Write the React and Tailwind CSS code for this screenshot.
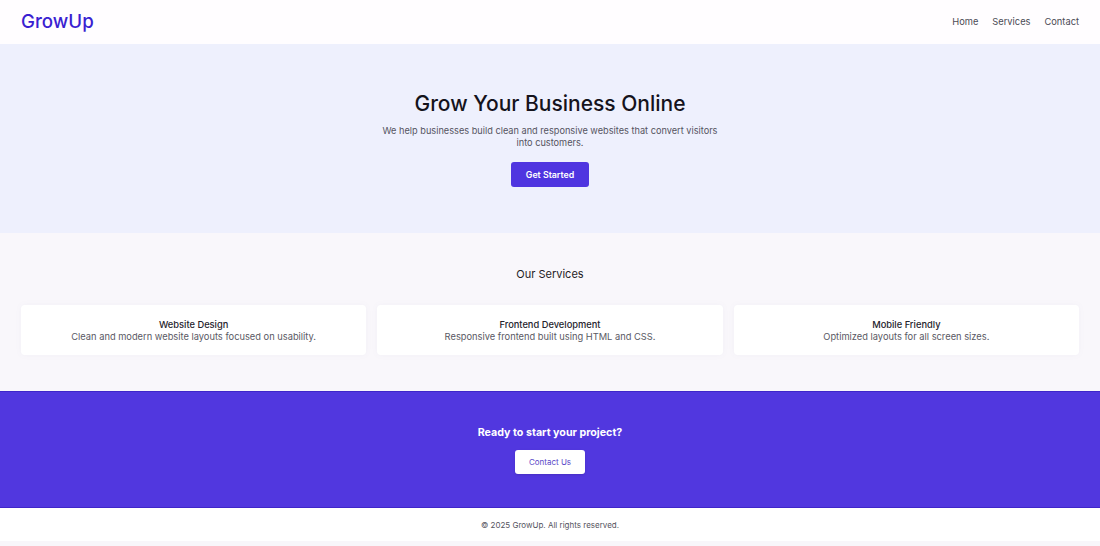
import React from 'react';

const services = [
  { title: 'Website Design', text: 'Clean and modern website layouts focused on usability.' },
  { title: 'Frontend Development', text: 'Responsive frontend built using HTML and CSS.' },
  { title: 'Mobile Friendly', text: 'Optimized layouts for all screen sizes.' },
];

const App = () => {
  return (
    <div className="min-h-[546px] bg-[#f8f6fa] font-['Inter','Liberation_Sans',sans-serif]">
      {/* Header */}
      <header className="h-[44px] bg-[#fffdff] px-[21px] flex items-center justify-between">
        <div className="text-[18.7px] font-medium text-[#3a1fd1] leading-none">GrowUp</div>
        <nav className="flex items-center gap-[14px] text-[9.3px] text-[#4b4b55]">
          <a href="#">Home</a>
          <a href="#">Services</a>
          <a href="#">Contact</a>
        </nav>
      </header>

      {/* Hero */}
      <section className="bg-[#eef0fd] pt-[47px] pb-[46px] flex flex-col items-center text-center">
        <h1 className="text-[21px] leading-[26px] font-medium text-[#15131c]">Grow Your Business Online</h1>
        <p className="mt-[8px] max-w-[345px] text-[9.2px] leading-[11.5px] text-[#55545f]">
          We help businesses build clean and responsive websites that convert visitors into customers.
        </p>
        <button className="mt-[14px] h-[25px] w-[78px] rounded-[3px] bg-[#4f35e0] text-white text-[8.8px] font-semibold">
          Get Started
        </button>
      </section>

      {/* Services */}
      <section className="bg-[#f9f7fb] pt-[34px] pb-[36px] px-[21px]">
        <h2 className="text-center text-[11px] leading-[15px] text-[#1f1d26]">Our Services</h2>
        <div className="mt-[23px] grid grid-cols-3 gap-[11px]">
          {services.map((s) => (
            <div
              key={s.title}
              className="h-[50px] bg-white rounded-[4px] shadow-[0_0_6px_rgba(120,110,160,0.05)] flex flex-col items-center justify-center text-center pt-[1px]"
            >
              <h3 className="text-[9.3px] leading-[11.5px] font-medium text-[#25232c]">{s.title}</h3>
              <p className="text-[9.3px] leading-[11.5px] text-[#5a5964]">{s.text}</p>
            </div>
          ))}
        </div>
      </section>

      {/* Call to action */}
      <section className="bg-[#5137df] border-t border-[#3f26c9] border-b pt-[33px] pb-[33px] flex flex-col items-center">
        <h2 className="text-[10.7px] leading-[15px] font-bold text-white">Ready to start your project?</h2>
        <button className="mt-[10px] h-[24px] w-[70px] rounded-[3px] bg-white text-[8px] text-[#5a48c8] shadow-sm">
          Contact Us
        </button>
      </section>

      {/* Footer */}
      <footer className="h-[33px] bg-white flex items-center justify-center text-[8px] text-[#55545e]">
        © 2025 GrowUp. All rights reserved.
      </footer>
    </div>
  );
};

export default App;
